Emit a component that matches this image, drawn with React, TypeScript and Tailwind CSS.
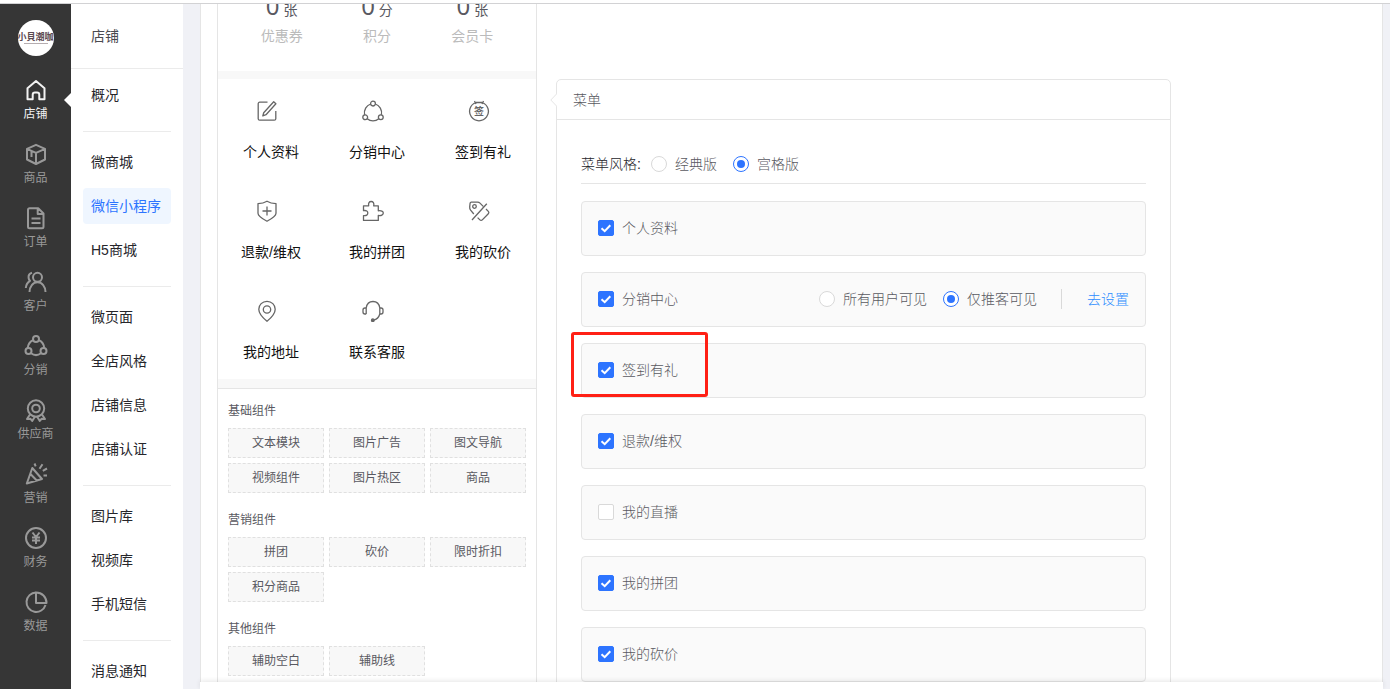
import { useState } from "react";
import type { ReactNode } from "react";

type NavItem = { label: string; icon: ReactNode };

const mainNav: NavItem[] = [
  {
    label: "店铺",
    icon: <path d="M3.500 20.200V9.300L12 2l8.500 7.300v10.900h-5.200v-4.400a2.300 2.300 0 0 0-2.300-2.300h-2a2.300 2.300 0 0 0-2.300 2.300v4.400z" />,
  },
  {
    label: "商品",
    icon: <path d="M12 1.800 21 5.800v10.700L12 21l-9-4.500V5.800zM3 5.800l9 4 9-4M12 9.800V21M7.500 8v6" />,
  },
  {
    label: "订单",
    icon: (
      <path d="M5.500 1.200h8.700l5.300 5.300v13.300a1.500 1.500 0 0 1-1.500 1.500H5.500A1.500 1.500 0 0 1 4 19.800V2.700a1.500 1.500 0 0 1 1.500-1.500zM13.700 1.500V7h5.500M7.500 11.500h9M7.500 16h9" />
    ),
  },
  {
    label: "客户",
    icon: (
      <>
        <circle cx="13.500" cy="6.300" r="4.500" />
        <path d="M5.500 21c0-5.500 3.500-9.800 8-9.800s8 4.300 8 9.800M8 1.800C5.500 2.500 4.300 4.500 4.600 6.800c.1 1.200.6 2.200 1.400 3C3.500 11.300 2 14 1.800 17" />
      </>
    ),
  },
  {
    label: "分销",
    icon: (
      <>
        <circle cx="12" cy="4" r="3" />
        <circle cx="4.500" cy="16" r="3" />
        <circle cx="19.500" cy="16" r="3" />
        <path d="M9 5.200C6 6.800 4 9.500 3.800 13M15 5.200c3 1.600 5 4.300 5.200 7.800M7 18.300c3 2.200 7 2.200 10 0" />
      </>
    ),
  },
  {
    label: "供应商",
    icon: (
      <>
        <circle cx="12" cy="9.500" r="8.200" />
        <circle cx="12" cy="9.500" r="3.800" />
        <path d="M6 15.500l-3 4.500 3.500-.2L8.200 22l2.800-4.500M18 15.500l3 4.500-3.500-.2-1.700 2.200-2.800-4.500" />
      </>
    ),
  },
  {
    label: "营销",
    icon: (
      <path d="M8.300 5 18 16 2.800 20.500zM6.500 11l6.500 6.800M10.500.5l1.200 2.800M18.500 1.200l-3 4.500M23 5.500l-4.200 2.300M23 12.500h-3.500" />
    ),
  },
  {
    label: "财务",
    icon: (
      <>
        <circle cx="12" cy="11" r="10" />
        <path d="M8.500 5.500 12 10l3.500-4.500M12 10v7M8 10.500h8M8 13.500h8" />
      </>
    ),
  },
  {
    label: "数据",
    icon: <path d="M12 1.500A9.700 9.700 0 1 0 21.500 14M12 1.500V12h10.500C22.500 6 18 1.500 12 1.500z" />,
  },
];

const subNav: string[][] = [
  ["概况"],
  ["微商城", "微信小程序", "H5商城"],
  ["微页面", "全店风格", "店铺信息", "店铺认证"],
  ["图片库", "视频库", "手机短信"],
  ["消息通知"],
];

const stats = [
  { unit: "张", label: "优惠券" },
  { unit: "分", label: "积分" },
  { unit: "张", label: "会员卡" },
];

const shortcuts: NavItem[] = [
  {
    label: "个人资料",
    icon: (
      <path d="M11.500 2.200H3.700a1.500 1.500 0 0 0-1.500 1.500v15a1.500 1.500 0 0 0 1.500 1.500h14.600a1.500 1.500 0 0 0 1.500-1.500V11M17.700 1.800l2.200 2L10 14.700l-3.200 1.200.9-3.200z" />
    ),
  },
  {
    label: "分销中心",
    icon: (
      <>
        <circle cx="11" cy="3.600" r="2.400" />
        <circle cx="3.200" cy="17.300" r="2.400" />
        <circle cx="18.800" cy="17.300" r="2.400" />
        <path d="M8.600 4C4.500 5.300 1.500 10 2.600 14.900M13.400 4c4.100 1.300 7.100 6 6 10.900M5.200 18.700c3.300 2.900 8.300 2.900 11.600 0" />
      </>
    ),
  },
  {
    label: "签到有礼",
    icon: (
      <>
        <path d="M8 2.500a9.400 9.400 0 1 0 6 0M8 2.500h6M6.500 1l1.500 3M15.500 1 14 4" />
        <text x="11" y="15" textAnchor="middle" fontSize="10" fontWeight="700" fill="currentColor" stroke="none">
          签
        </text>
      </>
    ),
  },
  {
    label: "退款/维权",
    icon: (
      <path d="M11 1.200c2.800 1.700 5.800 2.300 9 2.400v9.600c0 3-4.500 5.600-9 8-4.500-2.400-9-5-9-8V3.600c3.200-.1 6.200-.7 9-2.400zM11 6.500v9M6.500 11h9" />
    ),
  },
  {
    label: "我的拼团",
    icon: (
      <path d="M1.500 5.800h5.200c-.6-2.800.6-4.300 2.500-4.300s3.200 1.500 2.500 4.300h4.600v5c2.900-.6 5 .6 5 2.300s-2.100 2.900-5 2.300v5H1.500v-4.800c3 .4 4.300-.8 4.300-2.500s-1.300-2.900-4.300-2.500z" />
    ),
  },
  {
    label: "我的砍价",
    icon: (
      <>
        <circle cx="6.500" cy="6.500" r="1.800" />
        <path d="M5.800 14 2.600 10.200C1.800 9.200 1.600 8 1.700 6.800l.4-3.600c.1-.7.500-1.100 1.200-1.100h6.200c1 0 1.800.3 2.500 1l3.200 3.300M18 9l2.300 2.400c.7.700.7 1.600 0 2.300l-6 6.200c-.7.700-1.700.7-2.400 0L9.600 17.600M18.800 3.800 4 20" />
      </>
    ),
  },
  {
    label: "我的地址",
    icon: (
      <>
        <path d="M11 1.300c4.700 0 8.200 3.600 8.200 8 0 4.600-4 8.600-8.200 12-4.200-3.400-8.200-7.400-8.200-12 0-4.400 3.500-8 8.200-8z" />
        <circle cx="11" cy="9.500" r="3.700" />
      </>
    ),
  },
  {
    label: "联系客服",
    icon: (
      <>
        <path d="M4.200 14V8C4.800 4 7.500 1.500 11 1.500S17.200 4 17.800 8v6c-.9 3.200-3 5.500-6.300 6.200M4.200 8H3a2 2 0 0 0-2 2v2a2 2 0 0 0 2 2h1.200M17.800 8H19a2 2 0 0 1 2 2v2a2 2 0 0 1-2 2h-1.200" />
        <circle cx="10.800" cy="20.200" r="1.300" fill="currentColor" />
      </>
    ),
  },
];

const componentGroups = [
  { title: "基础组件", items: ["文本模块", "图片广告", "图文导航", "视频组件", "图片热区", "商品"] },
  { title: "营销组件", items: ["拼团", "砍价", "限时折扣", "积分商品"] },
  { title: "其他组件", items: ["辅助空白", "辅助线"] },
];

const menuItems = [
  "个人资料",
  "分销中心",
  "签到有礼",
  "退款/维权",
  "我的直播",
  "我的拼团",
  "我的砍价",
];

type RadioProps = {
  name: string;
  label: string;
  checked: boolean;
  onChange: () => void;
};

const Radio = ({ name, label, checked, onChange }: RadioProps) => (
  <label className="flex items-center gap-2 text-[#595961]">
    <input
      type="radio"
      name={name}
      checked={checked}
      onChange={onChange}
      className="flex size-4 appearance-none items-center justify-center rounded-full border border-[#d9d9d9] bg-white checked:border-[#2d74ff] checked:before:size-2 checked:before:rounded-full checked:before:bg-[#2d74ff] checked:before:content-['']"
    />
    {label}
  </label>
);

type CheckboxProps = {
  label: string;
  checked: boolean;
  onChange: () => void;
};

const Checkbox = ({ label, checked, onChange }: CheckboxProps) => (
  <label className="flex items-center gap-2">
    <span className="relative flex size-4">
      <input
        type="checkbox"
        checked={checked}
        onChange={onChange}
        className="size-4 appearance-none rounded-xs border border-[#d9d9d9] bg-white checked:border-[#2d74ff] checked:bg-[#2d74ff]"
      />
      {checked && (
        <svg
          viewBox="0 0 16 16"
          className="pointer-events-none absolute inset-0 size-4 fill-none stroke-white stroke-2"
        >
          <path d="M3.500 8.200 6.700 11.200 12.300 5.200" />
        </svg>
      )}
    </span>
    {label}
  </label>
);

const App = () => {
  const [menuStyle, setMenuStyle] = useState("宫格版");
  const [visibility, setVisibility] = useState("仅推客可见");
  const [enabled, setEnabled] = useState<string[]>(menuItems.filter((item) => item !== "我的直播"));

  const toggle = (item: string) =>
    setEnabled((prev) => (prev.includes(item) ? prev.filter((i) => i !== item) : [...prev, item]));

  return (
    <div className="flex h-screen flex-col overflow-hidden bg-white font-['Liberation_Sans','Noto_Sans_CJK_SC',sans-serif] text-sm text-[#595961]">
      <div className="h-1 shrink-0 border-b border-[#d2d2d4]" />
      <div className="flex min-h-0 flex-1 bg-[#f0f1f6]">
        {/* Navigation principale */}
        <aside className="w-[71px] shrink-0 bg-[#363636] pt-4">
          <div className="mx-auto flex size-9 flex-col items-center justify-center overflow-hidden rounded-full bg-white text-[#5b4a50]">
            <span className="text-[9px] leading-[10px] font-bold whitespace-nowrap">小貝潮咖</span>
            <span className="mt-px h-px w-6 bg-[#b5adb0]" />
          </div>
          <nav className="mt-3">
            {mainNav.map((item, index) => (
              <a
                key={item.label}
                href="#"
                className={`relative flex h-16 flex-col items-center justify-center gap-[3px] pt-px text-xs leading-4 ${
                  index === 0 ? "text-[#f2f2f2]" : "text-[#999999]"
                }`}
              >
                <svg
                  viewBox="0 0 24 24"
                  className="size-6 fill-none stroke-current stroke-2"
                  strokeLinejoin="round"
                >
                  {item.icon}
                </svg>
                {item.label}
                {index === 0 && (
                  <svg viewBox="0 0 7 14" className="absolute top-[25px] right-0 h-3.5 w-[7px] fill-white">
                    <path d="M7 0v14L0 7z" />
                  </svg>
                )}
              </a>
            ))}
          </nav>
        </aside>

        {/* Sous-menu */}
        <nav className="w-28 shrink-0 overflow-hidden bg-white text-[#26262b]">
          <h1 className="flex h-[65px] items-center border-b border-[#ebebeb] px-5 text-[#4a4a50]">店铺</h1>
          <div className="px-3 pt-2">
            {subNav.map((group) => (
              <div
                key={group[0]}
                className="mb-3 flex flex-col gap-2 border-b border-[#ebebeb] pb-[18px] last:border-0"
              >
                {group.map((item) => (
                  <a
                    key={item}
                    href="#"
                    className={`flex h-9 items-center rounded-sm px-2 whitespace-nowrap ${
                      item === "微信小程序" ? "bg-[#eff6ff] text-[#2d74ff]" : ""
                    }`}
                  >
                    {item}
                  </a>
                ))}
              </div>
            ))}
          </div>
        </nav>

        <main className="mr-[7px] ml-[17px] flex min-w-0 flex-1 flex-col bg-white">
          <div className="flex min-h-0 flex-1 items-start overflow-hidden border-x border-[#e5e5e5] px-4">
            {/* Aperçu mobile + composants */}
            <section className="w-80 shrink-0 border-x border-[#e5e5e5]">
              <div className="flex h-[67px] px-4">
                {stats.map((stat) => (
                  <div key={stat.label} className="flex flex-1 flex-col items-center">
                    <div className="-mt-3 flex h-8 items-baseline gap-1">
                      <span className="font-['Noto_Sans',sans-serif] text-2xl leading-7">0</span>
                      <span>{stat.unit}</span>
                    </div>
                    <div className="leading-6 text-[#bbbbbb]">{stat.label}</div>
                  </div>
                ))}
              </div>
              <div className="h-2 bg-[#f8f8f8]" />
              <div className="grid grid-cols-3 text-[#111111]">
                {shortcuts.map((item) => (
                  <a key={item.label} href="#" className="flex h-25 flex-col items-center gap-[18px] pt-[21px]">
                    <svg
                      viewBox="0 0 22 22"
                      className="mr-2 size-[22px] fill-none stroke-current stroke-[1.3] text-[#666666]"
                      strokeLinejoin="round"
                    >
                      {item.icon}
                    </svg>
                    <span className="leading-6">{item.label}</span>
                  </a>
                ))}
              </div>
              <div className="h-2.5 border-b border-[#e5e5e5] bg-[#f8f8f8]" />
              <div className="px-2.5 pt-[13px] text-xs">
                {componentGroups.map((group) => (
                  <div key={group.title} className="mb-[18px]">
                    <h2 className="mb-2 leading-[18px]">{group.title}</h2>
                    <div className="grid grid-cols-3 gap-[5px]">
                      {group.items.map((item) => (
                        <button
                          key={item}
                          type="button"
                          className="h-[30px] border border-dashed border-[#e0e0e0] bg-[#f8f8f8]"
                        >
                          {item}
                        </button>
                      ))}
                    </div>
                  </div>
                ))}
              </div>
            </section>

            {/* Réglages du menu */}
            <section className="relative mt-[75px] ml-[19px] max-w-[615px] min-w-0 flex-1 rounded-[5px] border border-[#e5e5e5] font-light">
              <svg
                viewBox="0 0 7 14"
                className="absolute top-[13px] -left-[7px] h-3.5 w-[7px] fill-white stroke-[#e5e5e5]"
              >
                <path d="M7 .5.8 7 7 13.500" />
              </svg>
              <h2 className="flex h-10 items-center border-b border-[#e5e5e5] px-4">菜单</h2>
              <div className="px-6 pt-6 pb-6">
                <div className="flex h-10 items-center gap-4 border-b border-[#e5e5e5]">
                  <span className="-mr-1.5 text-[#26262b]">菜单风格:</span>
                  {["经典版", "宫格版"].map((item) => (
                    <Radio
                      key={item}
                      name="menu-style"
                      label={item}
                      checked={menuStyle === item}
                      onChange={() => setMenuStyle(item)}
                    />
                  ))}
                </div>
                <div className="mt-[17px] flex flex-col gap-4">
                  {menuItems.map((item) => (
                    <div
                      key={item}
                      className="relative flex h-[55px] items-center justify-between rounded-sm border border-[#e5e5e5] bg-[#fafafa] px-4 pb-0.5"
                    >
                      <Checkbox label={item} checked={enabled.includes(item)} onChange={() => toggle(item)} />
                      {item === "分销中心" && (
                        <div className="flex items-center gap-4">
                          {["所有用户可见", "仅推客可见"].map((option) => (
                            <Radio
                              key={option}
                              name="visibility"
                              label={option}
                              checked={visibility === option}
                              onChange={() => setVisibility(option)}
                            />
                          ))}
                          <span className="mr-[9px] ml-2 h-5 w-px bg-[#d9d9d9]" />
                          <a href="#" className="text-[#2d8cff]">
                            去设置
                          </a>
                        </div>
                      )}
                      {item === "签到有礼" && (
                        <div className="pointer-events-none absolute -top-3 -left-[11px] h-[65px] w-[137px] rounded-[3px] border-3 border-[#ff2015]" />
                      )}
                    </div>
                  ))}
                </div>
              </div>
            </section>
          </div>
          <footer className="relative h-[7px] shrink-0 bg-white shadow-[0_-1px_5px_rgba(0,0,0,0.1)]" />
        </main>
      </div>
    </div>
  );
};

export default App;
